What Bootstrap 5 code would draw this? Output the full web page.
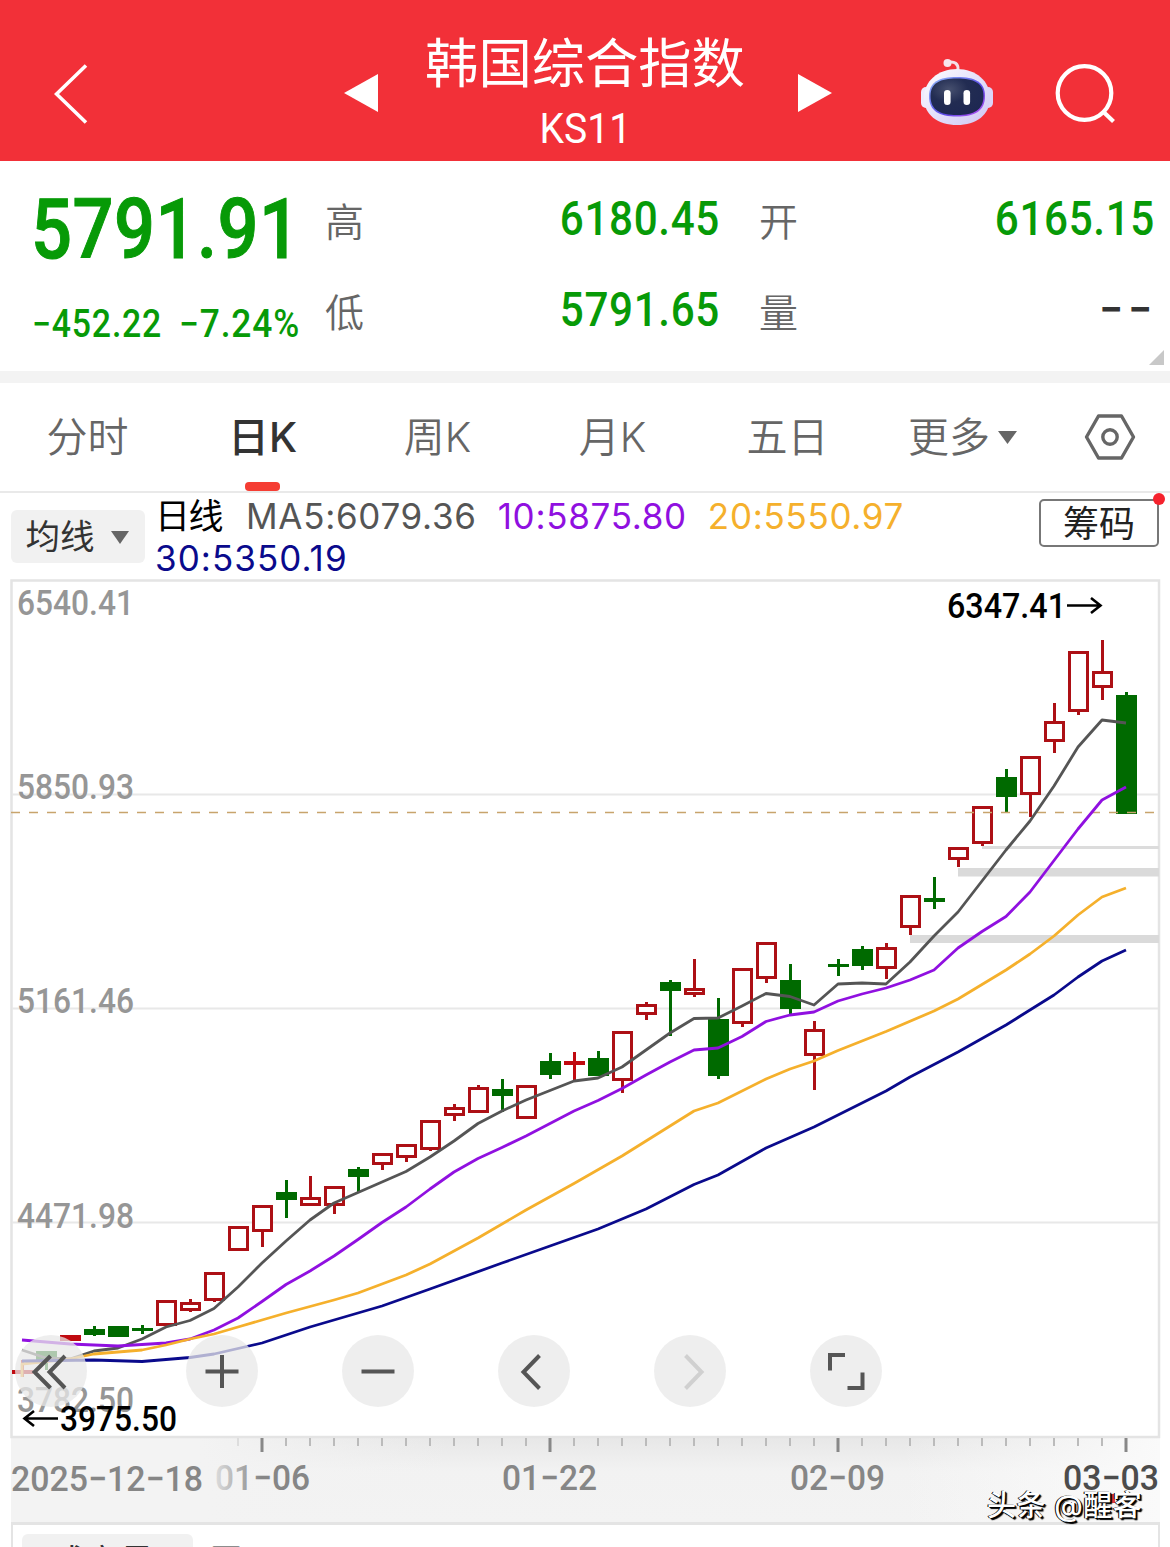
<!DOCTYPE html>
<html lang="zh-CN">
<head>
<meta charset="utf-8">
<meta name="viewport" content="width=device-width, initial-scale=1">
<title>韩国综合指数 KS11</title>
<link href="https://cdn.jsdelivr.net/npm/bootstrap@5.3.0/dist/css/bootstrap.min.css" rel="stylesheet">
<style>
  html, body { height: 1547px; overflow: hidden; }
  body { background: #fff; font-family: Inter, "Noto Sans CJK SC", sans-serif; color: #333; line-height: 1; }
  svg { display: block; flex-shrink: 0; }
  .num { font-family: Roboto, "Noto Sans CJK SC", sans-serif; font-weight: 500; white-space: nowrap; }
  .fall { color: #079a07; }
  .topbar { height: 161px; background: #f23038; color: #fff; padding: 0 54px; }
  .topbar .side { width: 290px; }
  .topbar .mid { width: 488px; }
  .name { font-size: 53.3px; line-height: 60px; font-weight: 400; padding-top: 34px; margin-left: -6px; white-space: nowrap; }
  .code { font-family: Roboto, sans-serif; font-size: 42px; line-height: 44px; margin-top: 13px; margin-left: -5px; transform: scaleX(.93); }
  .quote { height: 210px; padding: 0 17px 0 32px; }
  .q-main { width: 293px; }
  .q-price { font-size: 83px; line-height: 80px; padding-top: 29px; letter-spacing: .5px; transform: scaleX(.87); transform-origin: left; margin-left: -1px; -webkit-text-stroke: 1px #079a07; }
  .q-chg { font-size: 38px; line-height: 44px; margin-top: 32px; letter-spacing: .9px; }
  .q-chg span { display: block; width: 152px; transform: scaleX(.89); transform-origin: left; }
  .q-chg span + span { transform: scaleX(.93); }
  .q-cell { height: 91px; padding-top: 33px; }
  .q-cell .lab { font-size: 39px; line-height: 56px; color: #666; font-weight: 350; }
  .q-cell .val { font-size: 48px; line-height: 50px; letter-spacing: .7px; margin-right: -2px; transform: scaleX(.88); transform-origin: right; }
  .q-cell .none { letter-spacing: 6px; margin-right: -4px; line-height: 49px; }
  .q-a { width: 393px; margin-right: 41px; }
  .strip { height: 12px; background: #f3f3f3; }
  .periods { height: 110px; border-bottom: 2px solid #e9e9e9; }
  .periods .tab-i { width: 175px; height: 108px; font-size: 41px; line-height: 109px; color: #666; font-weight: 350; white-space: nowrap; }
  .periods .on { color: #333; font-weight: 500; }
  .on i { left: 70px; top: 99px; width: 35px; height: 9px; border-radius: 4px; background: #f53d33; }
  .ma-row { height: 86px; padding: 0 11px; }
  .ma-btn { width: 134px; height: 53px; margin-top: 17px; padding: 2px 2px 0 0; border-radius: 6px; background: #f1f1f1; font-size: 34.5px; }
  .ma-text { width: 880px; margin: 3px 0 0 10px; font-size: 35px; line-height: 41.5px; letter-spacing: .7px; white-space: nowrap; }
  .chip-btn { width: 120px; height: 48px; margin-top: 6px; border: 2px solid #777; border-radius: 5px; font-size: 36px; line-height: 46px; color: #222; }
  .chip-btn i { width: 12px; height: 12px; right: -8px; top: -8px; background: #f5222d; }
  .chart-wrap { height: 943px; }
  .tools { left: 15px; top: 756px; gap: 84px; }
  .tools span { width: 72px; height: 72px; background: rgba(232,232,232,.75); }
  .tools span:first-child { margin-right: 15px; }
  .wm { left: 987px; top: 907px; font-size: 29px; line-height: 40px; color: #fff; font-weight: 500; white-space: nowrap; text-shadow: 2px 2px 1px #000, 1px 1px 0 #000, -1px 0 0 #000; letter-spacing: .5px; }
  .volume { height: 25px; margin: 0 10px 0 11px; border: 2px solid #e4e4e4; border-top-width: 3px; border-bottom: 0; overflow: hidden; padding: 9px 0 0 9px; }
  .vol-btn { width: 171px; height: 53px; border-radius: 6px; background: #f1f1f1; font-size: 34px; line-height: 56px; padding-left: 30px; }
  .vol-t { font-size: 34px; line-height: 54px; margin-left: 16px; }
</style>
</head>
<body>
<header class="topbar d-flex">
  <div class="side d-flex align-items-center">
    <svg width="34" height="60" viewBox="0 0 34 60" style="margin-top:27px"><path d="M32 1.500L2.500 30L32 58.500" fill="none" stroke="#fff" stroke-width="3.600"/></svg>
  </div>
  <div class="mid d-flex justify-content-between">
    <svg width="34" height="38" style="margin-top:74px"><path d="M0 19L34 0V38Z" fill="#fff"/></svg>
    <div class="text-center">
      <div class="name">韩国综合指数</div>
      <div class="code">KS11</div>
    </div>
    <svg width="34" height="38" style="margin-top:74px"><path d="M34 19L0 0V38Z" fill="#fff"/></svg>
  </div>
  <div class="d-flex ms-auto">
    <svg width="74" height="70" viewBox="920 57 74 70" style="margin:57px 61px 0 0">
      <defs>
        <linearGradient id="shell" x1="0" y1="0" x2="1" y2="1"><stop offset="0" stop-color="#fff"/><stop offset=".5" stop-color="#e4e0fb"/><stop offset="1" stop-color="#cfc6f2"/></linearGradient>
        <linearGradient id="glow" x1="0" y1="0" x2="1" y2="1"><stop offset="0" stop-color="#8fb8f8"/><stop offset=".6" stop-color="#5a49e8"/><stop offset="1" stop-color="#c050f0"/></linearGradient>
        <radialGradient id="visor" cx=".35" cy=".3" r=".8"><stop offset="0" stop-color="#47506f"/><stop offset=".45" stop-color="#222c52"/><stop offset="1" stop-color="#1d2752"/></radialGradient>
      </defs>
      <path d="M947 62.500C955 60.500 958.500 64 958 70" fill="none" stroke="#f3dfe8" stroke-width="3"/>
      <circle cx="947.500" cy="63" r="4" fill="#f7e4ec"/>
      <rect x="921" y="87" width="12" height="21" rx="5" fill="#efeafd"/><rect x="981" y="87" width="12" height="21" rx="5" fill="#dcd5f7"/>
      <path d="M957 69C976 69 990 81 990 98C990 115 976 125 957 125C938 125 924 115 924 98C924 81 938 69 957 69Z" fill="url(#shell)"/>
      <path d="M957 77C975 77 985 82 985 96C985 111 975 116.500 957 116.500C939 116.500 929 111 929 96C929 82 939 77 957 77Z" fill="url(#glow)"/>
      <path d="M957 78.500C974 78.500 983.500 83 983.500 96C983.500 110 974 115 957 115C940 115 930.500 110 930.500 96C930.500 83 940 78.500 957 78.500Z" fill="url(#visor)"/>
      <rect x="944" y="90" width="6.600" height="15" rx="3.300" fill="#fff"/><rect x="963.500" y="90" width="6.600" height="15" rx="3.300" fill="#fff"/>
    </svg>
    <svg width="61" height="62" viewBox="0 0 61 62" style="margin-top:64px"><circle cx="29.500" cy="29" r="26.800" fill="none" stroke="#fff" stroke-width="4.200"/><path d="M47.500 47L58.500 57.500" stroke="#fff" stroke-width="4.200"/></svg>
  </div>
</header>

<section class="quote d-flex position-relative">
  <div class="q-main">
    <div class="q-price num fall">5791.91</div>
    <div class="q-chg num fall d-flex"><span>−452.22</span><span>−7.24%</span></div>
  </div>
  <div class="q-a">
    <div class="q-cell d-flex justify-content-between"><span class="lab">高</span><span class="val num fall">6180.45</span></div>
    <div class="q-cell d-flex justify-content-between"><span class="lab">低</span><span class="val num fall">5791.65</span></div>
  </div>
  <div class="flex-grow-1">
    <div class="q-cell d-flex justify-content-between"><span class="lab">开</span><span class="val num fall">6165.15</span></div>
    <div class="q-cell d-flex justify-content-between"><span class="lab">量</span><span class="val none num">−−</span></div>
  </div>
  <svg class="position-absolute" width="15" height="15" style="right:6px;bottom:6px"><path d="M15 0V15H0Z" fill="#c8c8c8"/></svg>
</section>
<div class="strip"></div>

<nav class="periods d-flex text-center">
  <div class="tab-i">分时</div>
  <div class="tab-i on position-relative">日K<i class="position-absolute"></i></div>
  <div class="tab-i">周K</div>
  <div class="tab-i">月K</div>
  <div class="tab-i">五日</div>
  <div class="tab-i d-flex align-items-center justify-content-center">更多<svg width="19" height="15" style="margin-left:8px"><path d="M0 1H19L9.500 14Z" fill="#666"/></svg></div>
  <svg width="52" height="46" viewBox="0 0 52 46" style="margin:31px 0 0 34px"><path d="M14.500 2H37.500L49.500 23L37.500 44H14.500L2.500 23Z" fill="none" stroke="#666" stroke-width="3.400" stroke-linejoin="round"/><circle cx="26" cy="23" r="7.200" fill="none" stroke="#666" stroke-width="3.400"/></svg>
</nav>

<div class="ma-row d-flex">
  <div class="ma-btn d-flex align-items-center justify-content-center">均线<svg width="18" height="14" style="margin-left:16px"><path d="M0 0H18L9 13Z" fill="#666"/></svg></div>
  <div class="ma-text"><span class="text-black" style="letter-spacing:-1.500px">日线</span><span style="margin-left:24px;color:#555">MA5:6079.36</span><span style="margin-left:21px;color:#9010e0">10:5875.80</span><span style="margin-left:21px;color:#f5b02c">20:5550.97</span><br><span style="color:#0a0a8c;letter-spacing:1.050px">30:5350.19</span></div>
  <div class="chip-btn position-relative text-center ms-auto">筹码<i class="position-absolute rounded-circle"></i></div>
</div>

<div class="chart-wrap position-relative">
  <svg id="chart" width="1170" height="943" viewBox="0 579 1170 943"></svg>
  <div class="tools position-absolute d-flex">
    <span class="rounded-circle"><svg width="72" height="72" fill="none" stroke="#555" stroke-width="4"><path d="M35.500 21L19.500 37L35.500 53M50 21L34.500 37L50 53"/></svg></span>
    <span class="rounded-circle"><svg width="72" height="72" fill="none" stroke="#555" stroke-width="4"><path d="M19.500 36.500H52.500M36 20V53"/></svg></span>
    <span class="rounded-circle"><svg width="72" height="72" fill="none" stroke="#555" stroke-width="4"><path d="M19.500 36.500H52.500"/></svg></span>
    <span class="rounded-circle"><svg width="72" height="72" fill="none" stroke="#555" stroke-width="4"><path d="M41.500 20.500L25.500 37L41.500 53.500"/></svg></span>
    <span class="rounded-circle"><svg width="72" height="72" fill="none" stroke="#d0d0d0" stroke-width="4"><path d="M31.500 20.500L47.500 37L31.500 53.500"/></svg></span>
    <span class="rounded-circle"><svg width="72" height="72" fill="none" stroke="#555" stroke-width="4"><path d="M35 20H20V35.500M52.500 37.500V53H37.500"/></svg></span>
  </div>
  <div class="wm position-absolute">头条 @醒客</div>
</div>

<div class="volume d-flex"><div class="vol-btn">成交量</div><div class="vol-t">无</div></div>

<script>
// Daily candles: kind (r rising, g falling, s flat), high, body top, body bottom, low
const candles = `s 1360 1370 1374 1377;g 1351 1351 1360 1370;s 1335 1335 1341 1341;g 1326 1329 1335 1336;g 1326 1326 1337 1337;g 1325 1328 1331 1334;r 1300 1300 1326 1326;r 1299 1302 1311 1312;r 1272 1272 1301 1302;r 1226 1226 1251 1251;r 1205 1205 1232 1247;g 1180 1192 1200 1218;r 1176 1197 1206 1206;r 1186 1186 1206 1214;g 1167 1169 1177 1192;r 1153 1153 1165 1170;r 1144 1144 1158 1162;r 1120 1120 1150 1151;r 1104 1107 1116 1121;r 1085 1087 1113 1113;g 1079 1089 1096 1112;r 1085 1085 1119 1119;g 1053 1061 1075 1079;s 1052 1061 1065 1080;g 1051 1058 1076 1076;r 1031 1031 1081 1093;r 1002 1004 1015 1020;g 980 982 991 1036;r 959 988 995 997;g 998 1019 1076 1079;r 968 968 1024 1027;r 942 942 979 983;g 964 980 1009 1014;r 1021 1029 1056 1090;g 959 964 967 976;g 946 949 966 970;r 943 947 969 979;r 895 895 928 935;g 877 898 902 909;r 847 847 860 867;r 806 806 844 846;g 769 777 797 812;r 756 756 795 817;r 703 721 742 753;r 651 651 712 715;r 640 671 688 700;g 692 695 814 814`
  .split(';').map(s => s.split(' '));
const lines = {
  '#555': '22,1350 34,1354 46,1358 70,1359 94,1351 118,1348 142,1339 166,1327 190,1320.500 214,1308.500 238,1287 262,1263 286,1241 310,1220 334,1203 358,1192.500 382,1182 406,1171.500 430,1157 454,1141 478,1123.500 502,1111 526,1100 550,1090.500 574,1081 598,1078 622,1067 646,1050 670,1033 694,1018.500 718,1018 742,1006 766,993.500 790,996.500 814,1005 838,984 862,983 886,984 910,962 934,936 958,912 982,881 1006,850 1030,821 1054,786 1078,747 1102,720 1126,723',
  '#9010e0': '22,1340 70,1344 118,1346 166,1343 190,1339 214,1330 238,1318 262,1301.500 286,1284.500 310,1271 334,1256 358,1239.500 382,1222.500 406,1207 430,1189 454,1172 478,1158.500 502,1147.500 526,1136 550,1123.500 574,1111 598,1100.500 622,1088.500 646,1075 670,1062 694,1050 718,1048 742,1036.500 766,1021.500 790,1015 814,1012 838,1001 862,994 886,988 910,980 934,970 958,948 982,931.500 1006,916.500 1030,892 1054,860.500 1078,829 1102,800 1126,787',
  '#f5b02c': '22,1377 22,1364 70,1359 94,1354 142,1350 166,1345 190,1339 214,1334 238,1327 262,1320 286,1313 334,1300 358,1293 406,1275 430,1264 478,1238 526,1210 574,1183.500 622,1156 670,1126 694,1111 718,1103 766,1079 790,1069 814,1061 838,1050.500 886,1031.500 934,1011 958,999 1006,970 1030,954 1054,936 1078,915 1102,897 1126,888',
  '#0a0a8c': '22,1361 94,1360 142,1361.500 190,1357.500 214,1354 262,1343 310,1327 382,1306 430,1289 502,1263 550,1246 598,1229 646,1209 694,1184.500 718,1175 766,1148 814,1127 886,1091 910,1077 958,1052 1006,1025 1054,995 1078,977 1102,961 1126,950'
};
const rect = (x, y, w, h, f) => `<rect x="${x}" y="${y}" width="${w}" height="${h}" fill="${f}"/>`;
const label = (x, y, t, w, f, wt = 500) => `<text x="${x}" y="${y}" textLength="${w}" lengthAdjust="spacingAndGlyphs" font-family="Roboto, sans-serif" font-size="35.500" font-weight="${wt}" fill="${f}">${t}</text>`;
let out = `<defs>
  <linearGradient id="shade" x1="0" y1="0" x2="0" y2="1"><stop offset="0" stop-color="#e7e7e7"/><stop offset=".4" stop-color="#f2f2f2"/><stop offset="1" stop-color="#f3f3f3"/></linearGradient>
  <linearGradient id="fadeL"><stop offset="0" stop-color="#f3f3f3"/><stop offset="1" stop-color="#f3f3f3" stop-opacity="0"/></linearGradient>
  <linearGradient id="fadeR"><stop offset="0" stop-color="#fafafa" stop-opacity="0"/><stop offset="1" stop-color="#fafafa"/></linearGradient></defs>`;
out += rect(11, 1437, 1149, 85, '#f3f3f3') + rect(200, 1437, 960, 85, 'url(#shade)') + rect(200, 1437, 250, 85, 'url(#fadeL)') + rect(900, 1437, 260, 85, 'url(#fadeR)');
out += '<rect x="11.500" y="580.500" width="1147.500" height="856.500" fill="#fff" stroke="#e4e4e4" stroke-width="2.500"/>';
[794.5, 1008.5, 1222.5].forEach(y => out += rect(12, y - 1, 1146, 2, '#e8e8e8'));
out += rect(982, 846, 177, 3, '#dcdcdc') + rect(958, 868, 201, 8.5, '#dadada') + rect(910, 935, 249, 8, '#dadada');
[['6540.41', 615], ['5850.93', 799], ['5161.46', 1013], ['4471.98', 1228], ['3782.50', 1412]].forEach(([t, y]) => out += label(17, y, t, 117, '#969696'));
candles.forEach(([k, h, t, b, l], i) => {
  [h, t, b, l] = [h, t, b, l].map(Number);
  const x = 22 + 24 * i, c = k === 'g' ? '#006a00' : k === 's' ? '#c00a10' : '#ad1015';
  if (t > h) out += rect(x - 1, h, 3, t - h, c);
  if (l > b) out += rect(x - 1, b, 3, l - b, c);
  out += k === 'r' ? `<rect x="${x - 8.5}" y="${t + 1.5}" width="18" height="${b - t - 3}" fill="#fff" stroke="${c}" stroke-width="3"/>` : rect(x - 10, t, 21, b - t, c);
});
out += '<path d="M11 812.500H1158" stroke="#c8a46c" stroke-width="1.500" stroke-dasharray="9 9"/>';
for (const c in lines) out += `<polyline points="${lines[c]}" fill="none" stroke="${c}" stroke-width="2.800" stroke-linejoin="round"/>`;
out += label(947, 618, '6347.41', 119, '#000') + '<path d="M1067 605.500H1100M1091 598L1100.500 605.500L1091 613" fill="none" stroke="#000" stroke-width="2.600"/>';
out += label(60, 1431, '3975.50', 117, '#000') + '<path d="M58 1418.500H25M34 1411L24.500 1418.500L34 1426" fill="none" stroke="#000" stroke-width="2.600"/>';
for (let i = 9; i < 47; i++) {
  const big = (i - 10) % 12 === 0 || i === 46;
  out += rect(22 + 24 * i - (big ? 1.5 : 1), 1438, big ? 3 : 2, big ? 14 : 8, big ? '#888' : i === 9 ? '#ddd' : '#bbb');
}
out += label(215, 1490, '01−06', 95, '#868686', 500) + rect(203, 1460, 58, 40, 'url(#fadeL)');
out += label(11, 1491, '2025−12−18', 192, '#868686', 500) + label(502, 1490, '01−22', 95, '#868686', 500) + label(790, 1490, '02−09', 95, '#868686', 500) + label(1063, 1490, '03−03', 96, '#4c4c4c');
out += rect(1109, 1494, 6, 9, '#e03a40');
document.getElementById('chart').innerHTML = out;
</script>
<script src="https://cdn.jsdelivr.net/npm/bootstrap@5.3.0/dist/js/bootstrap.bundle.min.js"></script>
</body>
</html>
